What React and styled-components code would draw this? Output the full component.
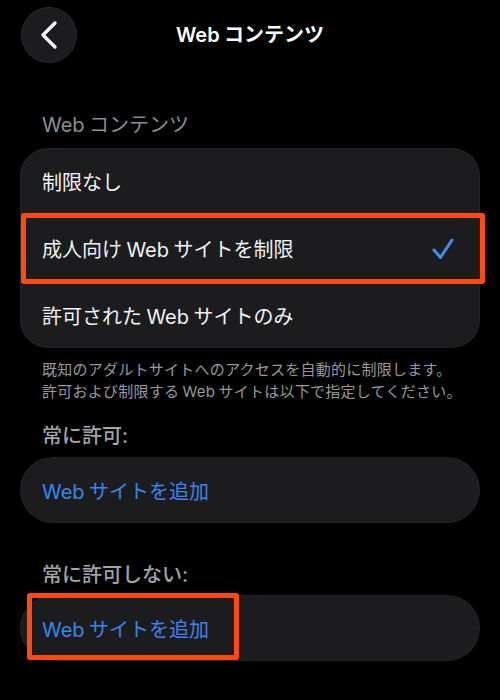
import React from "react";
import styled, { createGlobalStyle } from "styled-components";

const Global = createGlobalStyle`
  html, body {
    margin: 0;
    padding: 0;
    background: #000;
  }
  body {
    font-family: Inter, "Noto Sans CJK JP", "Noto Sans", sans-serif;
    color: #f2f2f7;
    -webkit-font-smoothing: antialiased;
  }
`;

const Page = styled.div`
  width: 500px;
  height: 700px;
  box-sizing: border-box;
  padding: 0 20px;
  background: #000;
  overflow: hidden;
`;

const Header = styled.header`
  display: grid;
  grid-template-columns: 56px 1fr 56px;
  align-items: center;
  padding-top: 7px;
  height: 56px;
`;

const BackButton = styled.button`
  width: 56px;
  height: 56px;
  margin-left: 1px;
  border-radius: 50%;
  background: #1c1c1e;
  border: 1px solid #2a2a2c;
  display: flex;
  align-items: center;
  justify-content: center;
  padding: 0;
  cursor: pointer;
`;

const Title = styled.h1`
  margin: 0;
  text-align: center;
  font-size: 20px;
  font-weight: 600;
  color: #fff;
  line-height: 24px;
`;

const Latin = styled.span`
  margin: 0 ${(p) => (p.$end ? 0 : 0.22)}em 0 ${(p) => (p.$start ? 0 : 0.22)}em;
`;

const SectionHeader = styled.div`
  margin-top: ${(p) => p.$top}px;
  padding-left: 22px;
  font-size: 20px;
  font-weight: ${(p) => (p.$strong ? 500 : 400)};
  line-height: 24px;
  color: ${(p) => (p.$strong ? "#a4a4a9" : "#8e8e93")};
`;

const Card = styled.div`
  margin-top: ${(p) => p.$top}px;
  background: #1c1c1e;
  border-radius: ${(p) => p.$radius}px;
  box-shadow: inset 0 0 0 1px rgba(255, 255, 255, 0.04);
  position: relative;
`;

const Row = styled.div`
  position: relative;
  height: ${(p) => p.$h}px;
  display: flex;
  align-items: center;
  justify-content: space-between;
  padding: 0 26px 0 22px;
  font-size: 20px;
  color: ${(p) => (p.$link ? "#3b86ec" : "#f2f2f7")};
`;

const Label = styled.span`
  display: inline-flex;
  align-items: baseline;
`;

const Highlight = styled.div`
  position: absolute;
  top: ${(p) => p.$t}px;
  bottom: ${(p) => p.$b}px;
  left: ${(p) => p.$l}px;
  ${(p) => (p.$w ? `width: ${p.$w}px;` : `right: ${p.$r}px;`)}
  border: 5px solid #ff4a10;
  border-radius: 3px;
  box-sizing: border-box;
  pointer-events: none;
`;

const Footer = styled.p`
  margin: 11px 0 0;
  padding-left: 22px;
  font-size: 15px;
  line-height: 22px;
  letter-spacing: 0.25px;
  color: #98989d;
`;

const Chevron = () => (
  <svg width="20" height="28" viewBox="0 0 20 28" fill="none">
    <path d="M16 2 L4 14 L16 26" stroke="#fff" strokeWidth="3.2" strokeLinecap="round" strokeLinejoin="round" />
  </svg>
);

const Check = () => (
  <svg width="22" height="24" viewBox="0 0 22 24" fill="none">
    <path d="M2 13 L8.5 20.5 L20 3" stroke="#3d8ff0" strokeWidth="3" strokeLinecap="round" strokeLinejoin="round" />
  </svg>
);

export default function App() {
  return (
    <>
      <Global />
      <Page>
        <Header>
          <BackButton aria-label="戻る">
            <Chevron />
          </BackButton>
          <Title>
            <Latin $start>Web</Latin>コンテンツ
          </Title>
          <span />
        </Header>

        <SectionHeader $top={50}>
          <Latin $start>Web</Latin>コンテンツ
        </SectionHeader>
        <Card $top={11} $radius={28}>
          <Row $h={67}>制限なし</Row>
          <Row $h={67}>
            <Label>
              成人向け<Latin>Web</Latin>サイトを制限
            </Label>
            <Check />
            <Highlight $t={-2} $b={-2} $l={1} $r={-5} />
          </Row>
          <Row $h={66}>
            <Label>
              許可された<Latin>Web</Latin>サイトのみ
            </Label>
          </Row>
        </Card>
        <Footer>
          既知のアダルトサイトへのアクセスを自動的に制限します。
          <br />
          許可および制限する<Latin>Web</Latin>サイトは以下で指定してください。
        </Footer>

        <SectionHeader $top={21} $strong>常に許可:</SectionHeader>
        <Card $top={9} $radius={33}>
          <Row $h={66} $link>
            <Label>
              <Latin $start>Web</Latin>サイトを追加
            </Label>
          </Row>
        </Card>

        <SectionHeader $top={40} $strong>常に許可しない:</SectionHeader>
        <Card $top={8} $radius={33}>
          <Row $h={66} $link>
            <Label>
              <Latin $start>Web</Latin>サイトを追加
            </Label>
            <Highlight $t={-2} $b={1} $l={7} $w={212} />
          </Row>
        </Card>
      </Page>
    </>
  );
}
